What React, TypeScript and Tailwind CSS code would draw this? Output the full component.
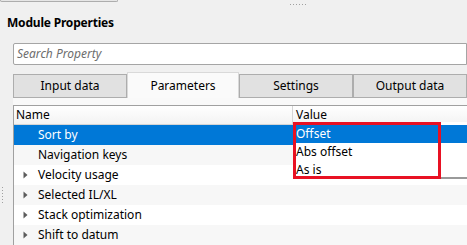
import React from "react";

type Row = { label: string; expandable?: boolean; selected?: boolean };

const rows: Row[] = [
    { label: "Sort by", selected: true },
    { label: "Navigation keys" },
    { label: "Velocity usage", expandable: true },
    { label: "Selected IL/XL", expandable: true },
    { label: "Stack optimization", expandable: true },
    { label: "Shift to datum", expandable: true },
];

const tabs = ["Input data", "Parameters", "Settings", "Output data"];

const Arrow = () => (
    <svg width="5" height="8" viewBox="0 0 5 8" className="mr-[9px]">
        <path d="M0.5 0.5 L4.5 4 L0.5 7.5 Z" fill="#5c5c5c" />
    </svg>
);

export default function App() {
    const options = ["Offset", "Abs offset", "As is"];

    return (
        <div
            className="relative w-[467px] h-[245px] overflow-hidden bg-[#f0f0f0] text-[12px] text-black"
            style={{ fontFamily: '"Noto Sans", "Open Sans", sans-serif' }}
        >
            {/* top strip: previous panel edge and splitter grip */}
            <div className="flex items-start h-[15px]">
                <div className="w-[118px] h-[2px] border-x border-b border-[#adadad] rounded-b-[2px] bg-[#e6e6e6]" />
                <div className="ml-[172px] mt-[4px] flex gap-[2px]">
                    {[0, 1, 2, 3, 4, 5].map((i) => (
                        <span key={i} className="w-[1px] h-[1px] bg-[#a0a0a0]" />
                    ))}
                </div>
            </div>

            <div className="pl-[7px] h-[28px] leading-[16px] font-bold text-[12px] tracking-[-0.2px]">
                Module Properties
            </div>

            <div className="flex">
                {/* left splitter gutter */}
                <div className="w-[13px] shrink-0">
                    <div className="ml-[2px] mt-[144px] flex flex-col gap-[2px]">
                        {[0, 1, 2, 3, 4, 5].map((i) => (
                            <span key={i} className="w-[1px] h-[1px] bg-[#a0a0a0]" />
                        ))}
                    </div>
                </div>

                <div className="flex-1 min-w-0">
                    {/* search */}
                    <div className="h-[22px] border border-[#a5a5a5] bg-white rounded-l-[2px] flex items-center pl-[3px] italic text-[#6d6d6d]">
                        Search Property
                    </div>

                    {/* tabs */}
                    <div className="mt-[7px] flex items-end h-[26px] relative z-10">
                        {tabs.map((t, i) =>
                            i === 1 ? (
                                <div
                                    key={t}
                                    className="w-[112px] h-[26px] bg-[#fafafa] border-t border-x border-[#d9d9d9] flex items-center justify-center pt-[1px] rounded-t-[1px]"
                                >
                                    {t}
                                </div>
                            ) : (
                                <div
                                    key={t}
                                    className="w-[114px] h-[24px] bg-[#e1e1e1] border border-[#adadad] flex items-center justify-center"
                                >
                                    {t}
                                </div>
                            )
                        )}
                    </div>

                    {/* tab panel */}
                    <div className="bg-[#f9f9f9] pt-[7px]">
                        <div className="border-l border-t border-[#a0a0a0] bg-white">
                            <div className="h-[19px] flex border-b border-[#d5d5d5] bg-gradient-to-b from-white to-[#f3f3f3] leading-[18px]">
                                <div className="w-[279px] pl-[2px] border-r border-[#d5d5d5]">Name</div>
                                <div className="pl-[3px]">Value</div>
                            </div>
                            {rows.map((r, i) => (
                                <div
                                    key={r.label}
                                    className={
                                        r.selected
                                            ? "h-[20px] flex items-center pl-[9px] bg-[#0078d7] text-white"
                                            : i % 2 === 1
                                                ? "h-[20px] flex items-center pl-[9px] bg-[#f7f7f7]"
                                                : "h-[20px] flex items-center pl-[9px] bg-white"
                                    }
                                >
                                    {r.expandable ? <Arrow /> : <span className="w-[14px]" />}
                                    <span className="ml-[1px]">{r.label}</span>
                                </div>
                            ))}
                        </div>
                    </div>
                </div>
            </div>

            {/* open dropdown list */}
            <div className="absolute left-[293px] top-[122px] w-[180px] h-[57px] bg-white border-b-2 border-[#9a9a9a] pt-[3px] pl-[3px]">
                {options.map((o, i) => (
                    <div
                        key={o}
                        className={
                            i === 0
                                ? "h-[18px] leading-[18px] bg-[#0078d7] text-white"
                                : "h-[18px] leading-[18px]"
                        }
                    >
                        {o}
                    </div>
                ))}
            </div>

            {/* red highlight */}
            <div className="absolute left-[293px] top-[122px] w-[148px] h-[57px] border-[3px] border-[#e81123]" />
        </div>
    );
}
